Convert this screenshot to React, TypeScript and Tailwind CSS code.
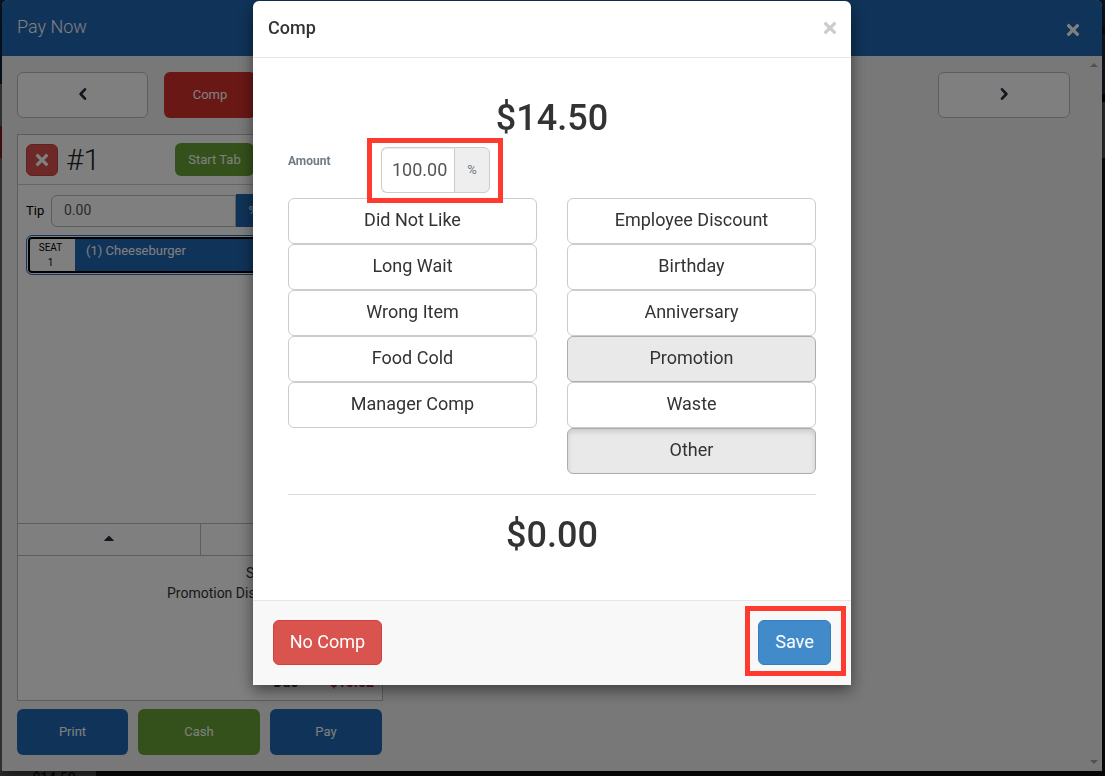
import { useState } from 'react';
import { FaTimes, FaCaretUp, FaCaretDown } from 'react-icons/fa';

const leftReasons = ['Did Not Like', 'Long Wait', 'Wrong Item', 'Food Cold', 'Manager Comp'];
const rightReasons = ['Employee Discount', 'Birthday', 'Anniversary', 'Promotion', 'Waste', 'Other'];

type ReasonButtonProps = {
  label: string;
  selected: boolean;
  focused: boolean;
  onClick: () => void;
};

const ReasonButton = ({ label, selected, focused, onClick }: ReasonButtonProps) => (
  <button
    type="button"
    aria-pressed={selected}
    onClick={onClick}
    className={`h-[46px] w-full rounded-md border pb-[3px] text-lg text-[#333] ${
      selected ? 'border-[#adadad] bg-[#e9e9e9]' : 'border-[#ccc] bg-white'
    } ${focused ? 'shadow-[inset_0_3px_5px_rgba(0,0,0,0.125)]' : ''}`}
  >
    {label}
  </button>
);

const Chevron = ({ direction }: { direction: 'left' | 'right' }) => (
  <svg width="14" height="14" viewBox="0 0 14 14" fill="none" stroke="currentColor" strokeWidth="2.6" strokeLinecap="round" strokeLinejoin="round">
    <path d={direction === 'left' ? 'M9 2.3 4.6 7 9 11.7' : 'M5 2.3 9.4 7 5 11.7'} />
  </svg>
);

// Point of sale screen that sits behind the payment window
const PosBackground = () => (
  <div className="absolute inset-0 flex bg-[#141414]" aria-hidden="true">
    <div className="flex w-24 flex-col bg-[#7c7c7c]">
      <div className="h-[84px] bg-[#0f2a4a]" />
      <div className="h-[42px] bg-[#7c7c7c]" />
      <div className="h-8 bg-[#9c2020]" />
      <div className="flex-1 bg-[#7c7c7c]" />
      <div className="h-1.5 overflow-hidden bg-[#5a5a5a] text-center text-sm leading-4 text-black">
        <span className="ml-3">$14.50</span>
      </div>
    </div>
    <div className="flex-1" />
    <div className="flex w-2 flex-col">
      <div className="h-[26px] bg-[#0f2a4a]" />
      <div className="h-2 bg-[#1f1208]" />
      <div className="h-[60px] bg-[#24303e]" />
      <div className="h-2 bg-black" />
      <div className="h-14 bg-[#5a5a5a]" />
    </div>
  </div>
);

const OrderPanel = () => {
  const [tip, setTip] = useState('0.00');

  return (
    <div className="flex flex-1 flex-col border border-[#bbb] bg-white">
      <div className="flex items-center border-b border-[#ccc] px-2 py-2">
        <button
          type="button"
          aria-label="Remove check"
          className="flex h-8 w-8 items-center justify-center rounded-md border border-[#d43f3a] bg-[#d9534f] text-white"
        >
          <FaTimes className="h-[18px] w-[18px]" />
        </button>
        <h2 className="ml-2 w-[109px] text-3xl leading-8 font-light text-[#222]">#1</h2>
        <button type="button" className="h-[33px] w-[79px] rounded-md bg-[#68a336] text-[13px] text-white">
          Start Tab
        </button>
      </div>

      <div className="flex items-center px-2 pt-[9px]">
        <label htmlFor="tip" className="w-[25px] text-[13px] text-black">
          Tip
        </label>
        <input
          id="tip"
          value={tip}
          onChange={(e) => setTip(e.target.value)}
          className="h-8 w-[185px] rounded-l-md border border-[#bbb] bg-white px-3 pb-0.5 text-sm text-[#555]"
        />
        <button type="button" className="h-[33px] w-[34px] bg-[#2067b3] text-xs text-white">
          %
        </button>
        <button type="button" className="h-[33px] flex-1 rounded-r-md bg-[#2067b3] text-xs text-white">
          $
        </button>
      </div>

      <button
        type="button"
        className="mx-2 mt-2 flex h-10 rounded-md border border-[#2067b3] bg-white p-px text-left"
      >
        <span className="flex h-full flex-1 overflow-hidden rounded border-2 border-black bg-[#2067b3]">
          <span className="w-[45px] bg-white pt-px pr-1 text-center text-[10px] leading-[15px] text-black">
            SEAT
            <br />1
          </span>
          <span className="pt-0.5 pl-[11px] text-[13px] leading-5 text-white">(1) Cheeseburger</span>
        </span>
      </button>

      <div className="mt-auto flex h-[33px] border-y border-[#bbb]">
        <button
          type="button"
          aria-label="Scroll up"
          className="flex flex-1 items-center justify-center border-r border-[#bbb] pb-1 text-[#222f3d]"
        >
          <FaCaretUp className="h-4 w-4" />
        </button>
        <button type="button" aria-label="Scroll down" className="flex flex-1 items-center justify-center pb-1 text-[#222f3d]">
          <FaCaretDown className="h-4 w-4" />
        </button>
      </div>

      <div className="flex h-36 flex-col px-2 pt-[7px] text-sm text-[#333]">
        <div className="flex justify-end">
          <span>Subtotal</span>
          <span className="w-[76px] text-right">$14.50</span>
        </div>
        <div className="flex justify-end">
          <span>Promotion Discount</span>
          <span className="w-[83px] text-right">$0.00</span>
        </div>
        <div className="mt-auto mb-2 flex justify-end font-bold">
          <span>Due</span>
          <span className="w-[76px] text-right text-[#b52b4b]">$15.52</span>
        </div>
      </div>
    </div>
  );
};

const PayNowWindow = () => (
  <div className="relative mr-[3px] mb-[5px] ml-0.5 flex flex-1 flex-col rounded-t-md bg-[#f1f1f1] shadow-[0_5px_15px_rgba(0,0,0,0.5)]">
    <div className="flex h-14 items-center justify-between rounded-t-md bg-[#2067b3] px-[15px] text-white">
      <h1 className="pb-0.5 text-lg font-light">Pay Now</h1>
      <button type="button" aria-label="Close payment" className="mt-[3px] mr-[5px]">
        <FaTimes className="h-[18px] w-[18px]" />
      </button>
    </div>

    <div className="flex flex-1">
      <div className="flex flex-1 flex-col pt-4 pb-4 pl-[15px]">
        <div className="flex gap-4">
          <button
            type="button"
            aria-label="Previous check"
            className="flex h-[46px] w-[131px] items-center justify-center rounded-md border border-[#bbb] bg-white pb-0.5 text-[#222f3d]"
          >
            <Chevron direction="left" />
          </button>
          <button type="button" className="h-[46px] w-[92px] rounded-md bg-[#d4302c] text-[13px] text-white">
            Comp
          </button>
          <button
            type="button"
            aria-label="Next check"
            className="ml-auto flex h-[46px] w-[132px] items-center justify-center rounded-md border border-[#bbb] bg-white pb-0.5 text-[#222f3d]"
          >
            <Chevron direction="right" />
          </button>
        </div>

        <div className="mt-4 flex w-[366px] flex-1 flex-col">
          <OrderPanel />
          <div className="mt-2 flex gap-2.5 pr-px text-[13px] text-white">
            <button type="button" className="h-[46px] w-[111px] rounded-md bg-[#2067b3]">
              Print
            </button>
            <button type="button" className="h-[46px] flex-1 rounded-md bg-[#68a336]">
              Cash
            </button>
            <button type="button" className="h-[46px] w-28 rounded-md bg-[#2067b3]">
              Pay
            </button>
          </div>
        </div>
      </div>

      {/* Scroll bar */}
      <div className="ml-[15px] flex w-[17px] flex-col items-center justify-between py-[5px] text-[#a3a3a3]">
        <svg width="8" height="8" viewBox="0 0 8 8" fill="currentColor">
          <path d="M0 6h8L4 2z" />
        </svg>
        <svg width="8" height="8" viewBox="0 0 8 8" fill="currentColor">
          <path d="M0 2h8L4 6z" />
        </svg>
      </div>
    </div>
  </div>
);

const CompDialog = () => {
  const [amount, setAmount] = useState('100.00');
  const [selected, setSelected] = useState(['Promotion', 'Other']);
  const [lastPressed, setLastPressed] = useState('Other');

  const toggleReason = (reason: string) => {
    setLastPressed(reason);
    setSelected((prev) => (prev.includes(reason) ? prev.filter((r) => r !== reason) : [...prev, reason]));
  };

  const renderReasons = (reasons: string[]) =>
    reasons.map((reason) => (
      <ReasonButton
        key={reason}
        label={reason}
        selected={selected.includes(reason)}
        focused={reason === lastPressed}
        onClick={() => toggleReason(reason)}
      />
    ));

  return (
    <div
      role="dialog"
      aria-labelledby="comp-title"
      className="w-full max-w-[598px] rounded-t-md bg-white text-[#333] shadow-[0_5px_15px_rgba(0,0,0,0.5)]"
    >
      {/* Header */}
      <div className="flex h-[57px] items-center justify-between border-b border-[#e5e5e5] pr-3 pb-[3px] pl-[15px]">
        <h2 id="comp-title" className="text-lg font-medium">
          Comp
        </h2>
        <button type="button" aria-label="Close" className="text-[#ccc]">
          <FaTimes className="h-[18px] w-[18px]" />
        </button>
      </div>

      {/* Body */}
      <div className="px-[35px] pt-10 pb-[45px]">
        <div className="text-center text-4xl leading-10 font-medium">$14.50</div>

        <div className="mt-[9px] flex items-start">
          <label htmlFor="amount" className="w-[93px] pt-1.5 text-xs font-bold text-[#6f7b85]">
            Amount
          </label>
          <div className="relative flex">
            <input
              id="amount"
              value={amount}
              onChange={(e) => setAmount(e.target.value)}
              className="h-[46px] w-[73px] rounded-l-md border border-r-0 border-[#ccc] bg-white pb-0.5 pl-2.5 text-lg text-[#555] shadow-[inset_0_1px_1px_rgba(0,0,0,0.075)]"
            />
            <span className="flex h-[46px] w-9 items-center justify-center rounded-r-md border border-[#ccc] bg-[#eee] text-[13px] text-[#6f7b85]">
              %
            </span>
            <div className="pointer-events-none absolute -top-[9px] -right-[13px] -bottom-2.5 -left-3.5 border-5 border-[#ff3b30]" />
          </div>
        </div>

        <div className="mt-[5px] grid grid-cols-2 items-start gap-[30px]">
          <div>{renderReasons(leftReasons)}</div>
          <div>{renderReasons(rightReasons)}</div>
        </div>

        <hr className="mt-5 border-[#ddd]" />
        <div className="mt-5 text-center text-4xl leading-10 font-medium">$0.00</div>
      </div>

      {/* Footer */}
      <div className="flex justify-between border-t border-[#e5e5e5] bg-[#f8f8f8] px-5 pt-[19px] pb-5 text-lg text-white">
        <button type="button" className="h-[45px] w-[109px] rounded-md border border-[#d43f3a] bg-[#d9534f] pb-0.5">
          No Comp
        </button>
        <div className="relative">
          <button type="button" className="h-[45px] w-[73px] rounded-md border border-[#357ebd] bg-[#428bca] pb-0.5">
            Save
          </button>
          <div className="pointer-events-none absolute -top-3.5 -right-[15px] -bottom-[11px] -left-[13px] border-5 border-[#ff3b30]" />
        </div>
      </div>
    </div>
  );
};

const App = () => (
  <div className="relative flex min-h-screen flex-col bg-black font-['Roboto',sans-serif]">
    <PosBackground />
    <PayNowWindow />
    <div className="fixed inset-0 flex items-start justify-center overflow-auto bg-black/50 pt-px pr-px">
      <CompDialog />
    </div>
  </div>
);

export default App;
